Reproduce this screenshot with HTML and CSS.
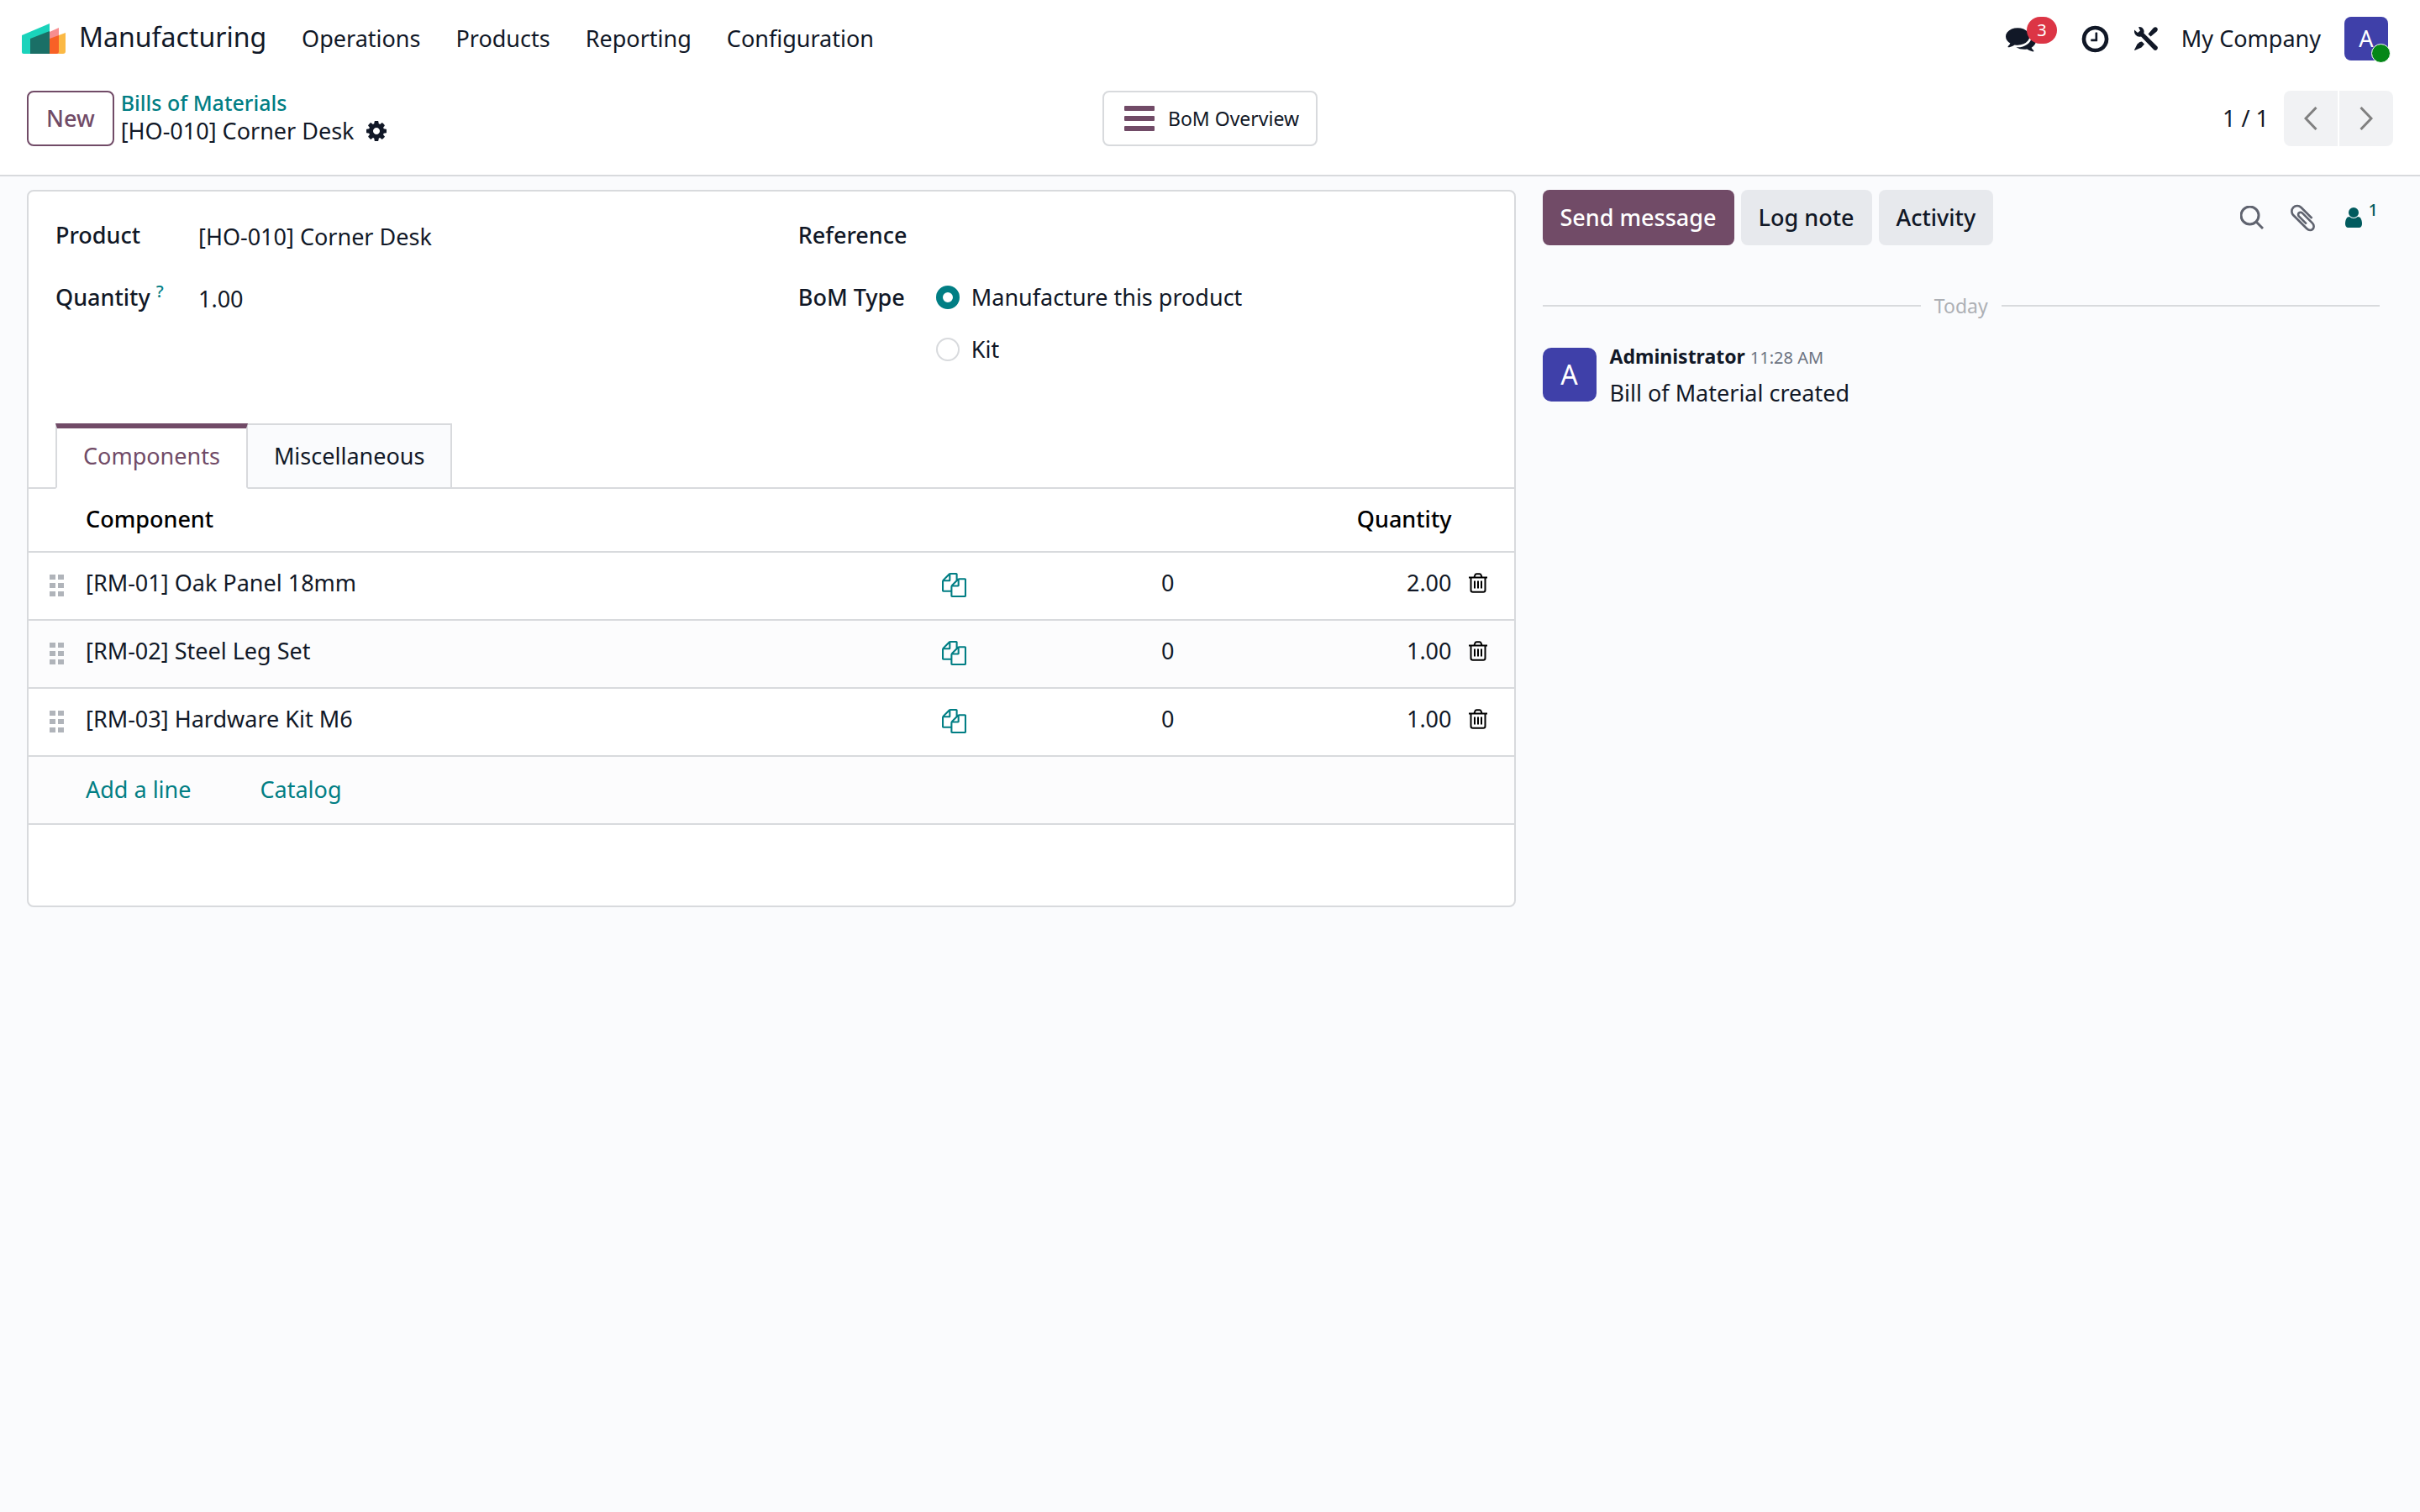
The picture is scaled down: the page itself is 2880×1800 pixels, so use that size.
FILE: index.html
```html
<!DOCTYPE html>
<html lang="en">
<head>
    <meta charset="UTF-8">
    <meta name="viewport" content="width=device-width, initial-scale=1.0">
    <title>[HO-010] Corner Desk - Manufacturing</title>
    <link rel="stylesheet" href="styles.css">
</head>
<body>
    <!-- shared icons -->
    <svg class="sprite" aria-hidden="true">
        <symbol id="icon-copy" viewBox="0 0 1792 1792">
            <path d="M1696 384q40 0 68 28t28 68v1216q0 40-28 68t-68 28h-960q-40 0-68-28t-28-68v-288h-544q-40 0-68-28t-28-68v-672q0-40 20-88t48-76l408-408q28-28 76-48t88-20h416q40 0 68 28t28 68v328q68-40 128-40h416zm-544 213l-299 299h299v-299zm-640-384l-299 299h299v-299zm196 647l316-316v-416h-384v416q0 40-28 68t-68 28h-416v640h512v-256q0-40 20-88t48-76zm956 804v-1152h-384v416q0 40-28 68t-68 28h-416v640h896z"/>
        </symbol>
        <symbol id="icon-trash" viewBox="0 0 22 24">
            <path d="M0 5.5h22M2.500 5.500v15q0 2.300 2.300 2.300h12.400q2.300 0 2.300-2.300v-15M6.500 5l1-2.600q.4-1.200 1.600-1.200h3.800q1.200 0 1.600 1.200l1 2.600M7 9.500v9M11 9.500v9M15 9.500v9" fill="none" stroke="currentColor" stroke-width="2"/>
        </symbol>
        <symbol id="icon-handle" viewBox="0 0 17 26">
            <path d="M0 0h7v6H0zM10 0h7v6h-7zM0 10h7v6H0zM10 10h7v6h-7zM0 20h7v6H0zM10 20h7v6h-7z"/>
        </symbol>
    </svg>

    <header class="navbar">
        <a class="logo" href="#" aria-label="Home">
            <svg width="52" height="36" viewBox="0 0 52 36">
                <path d="M33 18l19-7v22q0 3-3 3H33z" fill="#fbb945"/>
                <path d="M33 10l11-5v28q0 3-3 3h-8z" fill="#f78e90"/>
                <path d="M33 18l11-4v19q0 3-3 3h-8z" fill="#f86126"/>
                <path d="M0 14L33 0v36H2q-2 0-2-2z" fill="#1ad3bb"/>
                <path d="M10 18l23-9v27H10z" fill="#1a6f66"/>
            </svg>
        </a>
        <nav class="menu">
            <a class="brand" href="#">Manufacturing</a>
            <a href="#">Operations</a>
            <a href="#">Products</a>
            <a href="#">Reporting</a>
            <a href="#">Configuration</a>
        </nav>
        <div class="systray">
            <button class="tray-btn messages" aria-label="Messages">
                <svg width="36" height="36" viewBox="0 0 1792 1792"><path d="M1408 768q0 139-94 257t-256.500 186.500-353.500 68.500q-86 0-176-16-124 88-278 128-36 9-86 16h-3q-11 0-20.500-8t-11.500-21q-1-3-1-6.500t.5-6.500 2-6l2.500-5 3.500-5.500 4-5 4.500-5 4-4.500q5-6 23-25t26-29.500 22.500-29 25-38.500 20.500-44q-124-72-195-177t-71-224q0-139 94-257t256.500-186.500 353.500-68.500 353.500 68.500 256.500 186.500 94 257zm384 256q0 120-71 224.500t-195 176.500q10 24 20.500 44t25 38.500 22.500 29 26 29.500 23 25q1 1 4 4.500t4.500 5 4 5 3.500 5.500l2.500 5 2 6 .5 6.500-1 6.500q-3 14-13 22t-22 7q-50-7-86-16-154-40-278-128-90 16-176 16-271 0-472-132 58 4 88 4 161 0 309-45t264-129q125-92 192-212t67-254q0-77-23-152 129 71 204 178t75 230z"/></svg>
                <span class="badge">3</span>
            </button>
            <button class="tray-btn" aria-label="Activities">
                <svg width="37" height="37" viewBox="0 0 1792 1792"><path d="M1024 544v448q0 14-9 23t-23 9h-320q-14 0-23-9t-9-23v-64q0-14 9-23t23-9h224v-352q0-14 9-23t23-9h64q14 0 23 9t9 23zm416 352q0-148-73-273t-198-198-273-73-273 73-198 198-73 273 73 273 198 198 273 73 273-73 198-198 73-273zm224 0q0 209-103 385.500t-279.500 279.500-385.500 103-385.500-103-279.500-279.500-103-385.500 103-385.500 279.500-279.500 385.500-103 385.500 103 279.500 279.500 103 385.500z"/></svg>
            </button>
            <button class="tray-btn tools" aria-label="Developer tools">
                <svg width="28" height="28" viewBox="0 0 28 28">
                    <path d="M0 3.500l4 3.500 3-2.500L5 .3Q9-.8 11 3q1 2 .3 4.500L27.500 23.500q1 2-.5 3.500t-3.500.5L8 11.500Q4 12.500 1.500 9.500-.5 7 0 3.500z"/>
                    <path d="M16.500 8.500L22.500 1.500Q25-.8 27 1q1.800 2-.3 4.500L19.500 11.500zM9 17.500l3 3-3.500 4L.5 28 0 27.500 3.500 20.500l3-2.500z"/>
                </svg>
            </button>
            <button class="company">My Company</button>
            <button class="avatar user" aria-label="Administrator">A<span class="online"></span></button>
        </div>
    </header>

    <div class="control-panel">
        <div class="panel-left">
            <button class="btn btn-outline">New</button>
            <div class="breadcrumb">
                <a href="#">Bills of Materials</a>
                <div class="current">
                    <span>[HO-010] Corner Desk</span>
                    <button class="cog" aria-label="Actions">
                        <svg width="28" height="28" viewBox="0 0 1792 1792"><path d="M1152 896q0-106-75-181t-181-75-181 75-75 181 75 181 181 75 181-75 75-181zm512-109v222q0 12-8 23t-20 13l-185 28q-19 54-39 91 35 50 107 138 10 12 10 25t-9 23q-27 37-99 108t-94 71q-12 0-26-9l-138-108q-44 23-91 38-16 136-29 186-7 28-36 28h-222q-14 0-24.500-8.500t-11.500-21.500l-28-184q-49-16-90-37l-141 107q-10 9-25 9-14 0-25-11-126-114-165-168-7-10-7-23 0-12 8-23 15-21 51-66.500t54-70.500q-27-50-41-99l-183-27q-13-2-21-12.500t-8-23.500v-222q0-12 8-23t19-13l186-28q14-46 39-92-40-57-107-138-10-12-10-24 0-10 9-23 26-36 98.500-107.500t94.500-71.500q13 0 26 10l138 107q44-23 91-38 16-136 29-186 7-28 36-28h222q14 0 24.500 8.500t11.500 21.500l28 184q49 16 90 37l142-107q9-9 24-9 13 0 25 10 129 119 165 170 7 8 7 22 0 12-8 23-15 21-51 66.500t-54 70.500q26 50 41 98l183 28q13 2 21 12.500t8 23.500z"/></svg>
                    </button>
                </div>
            </div>
        </div>
        <button class="stat-btn">
            <svg width="36" height="30" viewBox="0 0 36 30"><rect width="36" height="6" rx="1"/><rect y="12" width="36" height="6" rx="1"/><rect y="24" width="36" height="6" rx="1"/></svg>
            BoM Overview
        </button>
        <div class="pager">
            <span class="pager-value">1 / 1</span>
            <button class="pager-btn prev" aria-label="Previous"><svg width="16" height="28" viewBox="0 0 16 28"><path d="M14.500 1L2 14l12.500 13"/></svg></button>
            <button class="pager-btn next" aria-label="Next"><svg width="16" height="28" viewBox="0 0 16 28"><path d="M1.500 1L14 14 1.500 27"/></svg></button>
        </div>
    </div>

    <main class="content">
        <section class="sheet">
            <form class="groups">
                <div class="group">
                    <label for="product">Product</label>
                    <input id="product" type="text" value="[HO-010] Corner Desk">
                    <label for="quantity">Quantity <sup>?</sup></label>
                    <input id="quantity" type="text" value="1.00">
                </div>
                <div class="group">
                    <label for="reference">Reference</label>
                    <input id="reference" type="text">
                    <span class="label" id="bom-type">BoM Type</span>
                    <div class="radios" role="radiogroup" aria-labelledby="bom-type">
                        <label><input type="radio" name="type" checked>Manufacture this product</label>
                        <label><input type="radio" name="type">Kit</label>
                    </div>
                </div>
            </form>

            <div class="tabs" role="tablist">
                <button class="tab active" role="tab" aria-selected="true">Components</button>
                <button class="tab" role="tab" aria-selected="false">Miscellaneous</button>
            </div>

            <table class="lines">
                <colgroup>
                    <col class="col-handle">
                    <col>
                    <col class="col-copy">
                    <col class="col-count">
                    <col class="col-qty">
                    <col class="col-trash">
                </colgroup>
                <thead>
                    <tr><th></th><th>Component</th><th></th><th></th><th class="num">Quantity</th><th></th></tr>
                </thead>
                <tbody>
                    <tr>
                        <td class="handle"><svg width="17" height="26"><use href="#icon-handle"/></svg></td>
                        <td>[RM-01] Oak Panel 18mm</td>
                        <td><button class="copy" aria-label="Show BoM"><svg width="29" height="29"><use href="#icon-copy"/></svg></button></td>
                        <td class="num">0</td>
                        <td class="num">2.00</td>
                        <td><button class="trash" aria-label="Delete row"><svg width="22" height="24"><use href="#icon-trash"/></svg></button></td>
                    </tr>
                    <tr>
                        <td class="handle"><svg width="17" height="26"><use href="#icon-handle"/></svg></td>
                        <td>[RM-02] Steel Leg Set</td>
                        <td><button class="copy" aria-label="Show BoM"><svg width="29" height="29"><use href="#icon-copy"/></svg></button></td>
                        <td class="num">0</td>
                        <td class="num">1.00</td>
                        <td><button class="trash" aria-label="Delete row"><svg width="22" height="24"><use href="#icon-trash"/></svg></button></td>
                    </tr>
                    <tr>
                        <td class="handle"><svg width="17" height="26"><use href="#icon-handle"/></svg></td>
                        <td>[RM-03] Hardware Kit M6</td>
                        <td><button class="copy" aria-label="Show BoM"><svg width="29" height="29"><use href="#icon-copy"/></svg></button></td>
                        <td class="num">0</td>
                        <td class="num">1.00</td>
                        <td><button class="trash" aria-label="Delete row"><svg width="22" height="24"><use href="#icon-trash"/></svg></button></td>
                    </tr>
                    <tr class="add-row">
                        <td></td>
                        <td colspan="5"><div class="add-links"><a href="#">Add a line</a><a href="#">Catalog</a></div></td>
                    </tr>
                </tbody>
            </table>
        </section>

        <aside class="chatter">
            <div class="chatter-top">
                <button class="btn btn-primary">Send message</button>
                <button class="btn btn-light">Log note</button>
                <button class="btn btn-light">Activity</button>
                <div class="chatter-tools">
                    <button aria-label="Search messages"><svg width="28" height="28" viewBox="0 0 28 28"><path d="M19 19l8 8M22 11.500a10.500 10.500 0 1 1-21 0 10.500 10.500 0 0 1 21 0z" fill="none" stroke="currentColor" stroke-width="3"/></svg></button>
                    <button aria-label="Attach files"><svg width="37" height="37" viewBox="0 0 1792 1792"><path d="M1596 1385q0 117-79 196t-196 79q-135 0-235-100l-777-776q-113-115-113-271 0-159 110-270t269-111q158 0 273 113l605 606q10 10 10 22 0 16-30.500 46.500t-46.500 30.500q-13 0-23-10l-606-607q-79-77-181-77-106 0-179 75t-73 181q0 105 76 181l776 777q63 63 145 63 64 0 106-42t42-106q0-82-63-145l-581-581q-26-24-60-24-29 0-48 19t-19 48q0 32 25 59l410 410q10 10 10 22 0 16-31 47t-47 31q-12 0-22-10l-410-410q-63-61-63-149 0-82 57-139t139-57q88 0 149 63l581 581q100 98 100 235z"/></svg></button>
                    <button class="followers" aria-label="Followers"><svg width="28" height="28" viewBox="0 0 1792 1792"><path d="M1536 1399q0 109-62.500 187t-150.500 78h-854q-88 0-150.500-78t-62.500-187q0-85 8.500-160.500t31.500-152 58.500-131 94-89 134.500-34.500q131 128 313 128t313-128q76 0 134.500 34.500t94 89 58.500 131 31.500 152 8.500 160.500zm-256-887q0 159-112.500 271.500t-271.500 112.500-271.500-112.500-112.500-271.500 112.500-271.500 271.500-112.500 271.500 112.500 112.500 271.500z"/></svg><sup>1</sup></button>
                </div>
            </div>
            <div class="day">Today</div>
            <article class="message">
                <div class="avatar">A</div>
                <div class="message-text">
                    <div class="author"><strong>Administrator</strong> <time>11:28 AM</time></div>
                    <p>Bill of Material created</p>
                </div>
            </article>
        </aside>
    </main>
</body>
</html>
```

FILE: styles.css
```css
* {
    box-sizing: border-box;
}
body {
    margin: 0;
    min-height: 100vh;
    background-color: #fafbfd;
    color: #111827;
    font-family: "Noto Sans", sans-serif;
    font-size: 27px;
    line-height: 40px;
}
button, input {
    margin: 0;
    padding: 0;
    border: 0;
    background: none;
    color: inherit;
    font: inherit;
}
button {
    cursor: pointer;
}
a {
    color: #017e84;
    text-decoration: none;
}
svg {
    display: block;
    fill: currentColor;
    flex: none;
}
.sprite {
    position: absolute;
    width: 0;
    height: 0;
}

/* navbar */
.navbar {
    display: flex;
    align-items: center;
    height: 92px;
    padding: 0 38px 0 26px;
    background: white;
}
.menu {
    display: flex;
    align-items: baseline;
    gap: 42px;
    margin-left: 16px;
    padding-bottom: 2px;
}
.menu a {
    color: inherit;
}
.menu .brand {
    font-size: 32px;
}
.systray {
    display: flex;
    align-items: center;
    gap: 28px;
    margin-left: auto;
}
.messages {
    position: relative;
    margin-right: 24px;
}
.badge {
    position: absolute;
    top: -8px;
    left: 25px;
    width: 36px;
    height: 32px;
    border-radius: 16px;
    background: #dc3545;
    color: white;
    font-size: 20px;
    line-height: 32px;
}
.avatar {
    display: flex;
    align-items: center;
    justify-content: center;
    width: 64px;
    height: 64px;
    border-radius: 10px;
    background: #3f40a9;
    color: white;
    font-size: 32px;
}
.user {
    position: relative;
    width: 52px;
    height: 52px;
    border-radius: 8px;
    font-size: 27px;
}
.online {
    position: absolute;
    right: -3px;
    bottom: -3px;
    width: 23px;
    height: 23px;
    border: 1px solid white;
    border-radius: 50%;
    background: #058718;
}

/* control panel */
.control-panel {
    display: grid;
    grid-template-columns: 1fr auto 1fr;
    align-items: center;
    padding: 13px 32px 31px;
    background: white;
    border-bottom: 2px solid #d8dadd;
}
.panel-left {
    display: flex;
    align-items: center;
    gap: 8px;
}
.btn {
    height: 66px;
    padding: 0 21px;
    border-radius: 8px;
    font-weight: 500;
}
.btn-outline {
    border: 2px solid #714b67;
    color: #714b67;
}
.btn-primary {
    background: #714b67;
    color: white;
}
.btn-light {
    background: #e7e9ed;
}
.breadcrumb {
    padding-bottom: 4px;
    line-height: 34px;
}
.breadcrumb a {
    display: block;
    font-size: 25px;
    font-weight: 500;
}
.current {
    display: flex;
    align-items: center;
    gap: 12px;
}
.stat-btn {
    display: flex;
    align-items: center;
    gap: 16px;
    height: 66px;
    padding: 0 20px 0 24px;
    border: 2px solid #d8dadd;
    border-radius: 8px;
    font-size: 23px;
}
.stat-btn svg {
    fill: #714b67;
}
.pager {
    display: flex;
    align-items: center;
    justify-content: flex-end;
    gap: 2px;
}
.pager-value {
    margin-right: 16px;
}
.pager-btn {
    display: flex;
    align-items: center;
    justify-content: center;
    width: 64px;
    height: 66px;
    background: #f1f2f4;
}
.pager-btn path {
    fill: none;
    stroke: #808080;
    stroke-width: 3;
}
.prev {
    border-radius: 8px 0 0 8px;
}
.next {
    border-radius: 0 8px 8px 0;
}

/* form */
.content {
    display: grid;
    grid-template-columns: 16fr 9fr;
    align-items: start;
    gap: 32px;
    padding: 16px 48px 32px 32px;
}
.sheet {
    padding-bottom: 96px;
    background: white;
    border: 2px solid #d8dadd;
    border-radius: 8px;
}
.groups {
    display: grid;
    grid-template-columns: 1fr 1fr;
    gap: 64px;
    padding: 32px 32px 68px;
}
.group {
    display: grid;
    grid-template-columns: 164px 1fr;
    grid-auto-rows: min-content;
    gap: 34px 6px;
}
.group > label, .label {
    font-weight: 500;
    white-space: nowrap;
}
.group > input {
    width: 100%;
    height: 40px;
    padding-top: 3px;
}
sup {
    color: #017e84;
    font-size: 20px;
    font-weight: 500;
    line-height: 20px;
    vertical-align: 10px;
}
.radios {
    display: flex;
    flex-direction: column;
    gap: 22px;
    margin-left: -6px;
}
.radios label {
    display: flex;
    align-items: center;
    gap: 14px;
}
.radios input {
    appearance: none;
    width: 28px;
    height: 28px;
    border: 2px solid #d8dadd;
    border-radius: 50%;
    background: white;
}
.radios input:checked {
    border: 8px solid #017e84;
}

/* tabs */
.tabs {
    display: flex;
    padding: 0 32px;
    border-bottom: 2px solid #d8dadd;
}
.tab {
    height: 78px;
    margin-bottom: -2px;
    padding: 0 31px;
    border: 2px solid #d8dadd;
    border-left: 0;
    background: #fafbfd;
}
.tab.active {
    padding-bottom: 5px;
    border-top: 6px solid #714b67;
    border-left: 2px solid #d8dadd;
    border-bottom-color: white;
    background: white;
    color: #714b67;
}

/* component lines */
.lines {
    width: 100%;
    border-collapse: separate;
    border-spacing: 0;
    table-layout: fixed;
}
.col-handle {
    width: 68px;
}
.col-copy {
    width: 88px;
}
.col-count {
    width: 189px;
}
.col-qty {
    width: 330px;
}
.col-trash {
    width: 74px;
}
.lines th {
    height: 76px;
    padding: 0 0 2px;
    border-bottom: 2px solid #d8dadd;
    color: black;
    font-weight: 500;
    text-align: left;
}
.lines td {
    height: 81px;
    padding: 0 0 8px;
    border-bottom: 2px solid #d8dadd;
}
.lines tbody tr:nth-child(even) {
    background: #fcfcfd;
}
.lines .num {
    text-align: right;
}
.handle svg {
    margin: 6px 0 0 25px;
    color: #b0b4ba;
}
.copy {
    display: block;
    margin-top: 6px;
    color: #017e84;
}
.trash {
    display: block;
    margin-left: 20px;
    color: black;
}
.lines .add-row td {
    padding-bottom: 2px;
}
.add-links {
    display: flex;
    gap: 82px;
}

/* chatter */
.chatter-top {
    display: flex;
    align-items: center;
    gap: 8px;
}
.chatter-tools {
    display: flex;
    align-items: center;
    gap: 28px;
    margin-left: auto;
    padding-right: 2px;
    color: #5f636f;
}
.followers {
    display: flex;
    color: #015a5e;
}
.followers sup {
    margin-left: 4px;
    color: inherit;
    line-height: 10px;
}
.day {
    display: flex;
    align-items: center;
    gap: 16px;
    margin: 50px 0 28px;
    color: #adb0b5;
    font-size: 23px;
    line-height: 44px;
}
.day::before, .day::after {
    content: "";
    flex: 1;
    height: 2px;
    background: #d8dadd;
}
.message {
    display: flex;
    gap: 16px;
}
.message-text {
    margin-top: -10px;
}
.message p {
    margin: 0;
    line-height: 44px;
}
.author {
    font-size: 23px;
}
.author strong {
    font-weight: 700;
}
.author time {
    color: #6b7280;
    font-size: 20px;
}
```
